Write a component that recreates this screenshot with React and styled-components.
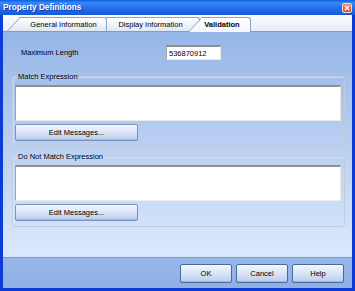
import React from "react";
import styled, { createGlobalStyle } from "styled-components";

const Global = createGlobalStyle`
  html, body { margin: 0; padding: 0; background: #ffffff; }
  body { font-family: "Liberation Sans", Arial, sans-serif; font-size: 7.5px; color: #000; }
`;

const Window = styled.div`
  width: 355px;
  height: 291px;
  display: flex;
  flex-direction: column;
  box-sizing: border-box;
`;

const TitleBar = styled.div`
  height: 15px;
  flex: none;
  display: flex;
  align-items: center;
  padding-left: 3px;
  padding-right: 3px;
  background: linear-gradient(to bottom, #0b5be4 0%, #3a88f5 18%, #2a74ef 45%, #1b62e4 80%, #1558da 100%);
`;

const Title = styled.div`
  font-family: "Liberation Sans", Arial, sans-serif;
  font-weight: 700;
  font-size: 8.2px;
  color: #ffffff;
  text-shadow: 1px 1px 0 rgba(10, 30, 120, 0.6);
  flex: 1;
`;

const CloseBtn = styled.div`
  width: 10px;
  height: 10px;
  box-sizing: border-box;
  border: 1px solid #f6dcd0;
  border-radius: 2px;
  background: linear-gradient(to bottom, #ec8a66, #d9481f);
  display: flex;
  align-items: center;
  justify-content: center;
`;

const Frame = styled.div`
  flex: 1;
  display: flex;
  flex-direction: column;
  border-left: 3px solid #0b3cd8;
  border-right: 3px solid #0b3cd8;
  border-bottom: 3px solid #0b3cd8;
  min-height: 0;
`;

const TabStrip = styled.div`
  height: 17px;
  flex: none;
  box-sizing: border-box;
  display: flex;
  align-items: flex-end;
  padding-left: 4px;
  border-bottom: 1px solid #7e9ccc;
  background: linear-gradient(to bottom, #fbfcfe, #e6edf8);
`;

const Tab = styled.div`
  position: relative;
  z-index: ${(p) => p.$z};
  width: ${(p) => p.$w}px;
  margin-left: ${(p) => p.$ml}px;
  height: ${(p) => (p.$active ? 15 : 14)}px;
  margin-bottom: ${(p) => (p.$active ? -1 : 0)}px;
  box-sizing: border-box;
  padding-left: 13px;
  padding-right: ${(p) => p.$pr}px;
  padding-bottom: ${(p) => (p.$active ? 1 : 0)}px;
  display: flex;
  align-items: center;
  justify-content: center;
  white-space: nowrap;
  font-size: 7.5px;
  font-weight: ${(p) => (p.$active ? 700 : 400)};
  color: #000;

  &::before {
    content: "";
    position: absolute;
    left: 0;
    bottom: 0;
    width: 16px;
    height: 100%;
    box-sizing: border-box;
    transform-origin: bottom left;
    transform: skewX(-43deg);
    background: ${(p) =>
      p.$active
        ? "linear-gradient(to bottom, #ffffff, #f3f6fb)"
        : "linear-gradient(to bottom, #ffffff, #dfe7f4)"};
    border-left: 1px solid #8aa3c8;
    border-top: 1px solid #8aa3c8;
    z-index: -1;
  }

  &::after {
    content: "";
    position: absolute;
    left: 13px;
    right: 0;
    top: 0;
    bottom: 0;
    box-sizing: border-box;
    background: ${(p) =>
      p.$active
        ? "linear-gradient(to bottom, #ffffff, #f3f6fb)"
        : "linear-gradient(to bottom, #ffffff, #dfe7f4)"};
    border-top: 1px solid #8aa3c8;
    border-right: 1px solid #8aa3c8;
    border-top-right-radius: 3px;
    z-index: -1;
  }
`;

const Content = styled.div`
  flex: 1;
  min-height: 0;
  display: flex;
  flex-direction: column;
  padding: 13px 7px 0 9px;
  background: linear-gradient(to bottom, #96b5e7 0%, #b6cdf1 45%, #dae8fc 100%);
`;

const Row = styled.div`
  height: 15px;
  display: flex;
  align-items: center;
`;

const Label = styled.div`
  width: 154px;
  box-sizing: border-box;
  padding-left: 9px;
  font-size: 7.5px;
`;

const TextInput = styled.div`
  width: 55px;
  height: 15px;
  box-sizing: border-box;
  padding-left: 2px;
  display: flex;
  align-items: center;
  background: #ffffff;
  border-top: 2px solid #8f8f8c;
  border-left: 1px solid #a3a3a0;
  border-right: 1px solid #e8e8e2;
  border-bottom: 1px solid #ecece6;
  font-size: 7.5px;
`;

const Group = styled.fieldset`
  margin: ${(p) => p.$mt}px 0 0 0;
  padding: 4px 3px 5px 2px;
  min-width: 0;
  border: 1px solid #c0cbdc;
  border-radius: 3px;
  box-shadow: inset 1px 1px 0 rgba(255, 255, 255, 0.35);
`;

const Legend = styled.legend`
  padding: 0 2px;
  margin-left: 1px;
  line-height: 9px;
  font-size: 7.5px;
  color: #000;
`;

const TextArea = styled.div`
  height: 36px;
  box-sizing: border-box;
  background: #ffffff;
  border-top: 2px solid #8f8f8c;
  border-left: 1px solid #a3a3a0;
  border-right: 1px solid #e8e8e2;
  border-bottom: 1px solid #ecece6;
`;

const Button = styled.button`
  width: ${(p) => p.$w}px;
  height: ${(p) => p.$h}px;
  margin: ${(p) => p.$m || 0};
  padding: 0;
  box-sizing: border-box;
  display: flex;
  align-items: center;
  justify-content: center;
  font-family: "Liberation Sans", Arial, sans-serif;
  font-size: 7.5px;
  color: #000;
  border: 1px solid ${(p) => p.$border};
  border-radius: 2px;
  background: linear-gradient(to bottom, #f2f6fd 0%, #dbe6f7 45%, #b9cdee 100%);
  box-shadow: inset 0 -1px 0 rgba(120, 150, 200, 0.35);
`;

const Footer = styled.div`
  height: 31px;
  flex: none;
  box-sizing: border-box;
  border-top: 1px solid #7a9bd2;
  padding: 6px 8px 0 0;
  display: flex;
  justify-content: flex-end;
  gap: 4px;
  background: linear-gradient(to bottom, #97b7e9, #8fb0e5);
`;

const tabs = [
  { label: "General Information", w: 100, ml: 0, pr: 0, z: 3 },
  { label: "Display Information", w: 106, ml: -13, pr: 6, z: 2 },
  { label: "Validation", w: 63, ml: -12, pr: 8, z: 4, active: true },
];

export default function App() {
  return (
    <>
      <Global />
      <Window>
        <TitleBar>
          <Title>Property Definitions</Title>
          <CloseBtn>
            <svg width="6" height="6" viewBox="0 0 6 6">
              <path d="M0.8 0.8 L5.2 5.2 M5.2 0.8 L0.8 5.2" stroke="#ffffff" strokeWidth="1.3" />
            </svg>
          </CloseBtn>
        </TitleBar>
        <Frame>
          <TabStrip>
            {tabs.map((t) => (
              <Tab key={t.label} $w={t.w} $ml={t.ml} $pr={t.pr} $z={t.z} $active={t.active}>
                {t.label}
              </Tab>
            ))}
          </TabStrip>
          <Content>
            <Row>
              <Label>Maximum Length</Label>
              <TextInput>536870912</TextInput>
            </Row>
            <Group $mt={12}>
              <Legend>Match Expression</Legend>
              <TextArea />
              <Button $w={123} $h={17} $m="3px 0 0 0" $border="#7893c2">
                Edit Messages...
              </Button>
            </Group>
            <Group $mt={5}>
              <Legend>Do Not Match Expression</Legend>
              <TextArea />
              <Button $w={123} $h={17} $m="3px 0 0 0" $border="#7893c2">
                Edit Messages...
              </Button>
            </Group>
          </Content>
          <Footer>
            <Button $w={52} $h={19} $border="#4f6795">OK</Button>
            <Button $w={52} $h={19} $border="#4f6795">Cancel</Button>
            <Button $w={52} $h={19} $border="#4f6795">Help</Button>
          </Footer>
        </Frame>
      </Window>
    </>
  );
}
